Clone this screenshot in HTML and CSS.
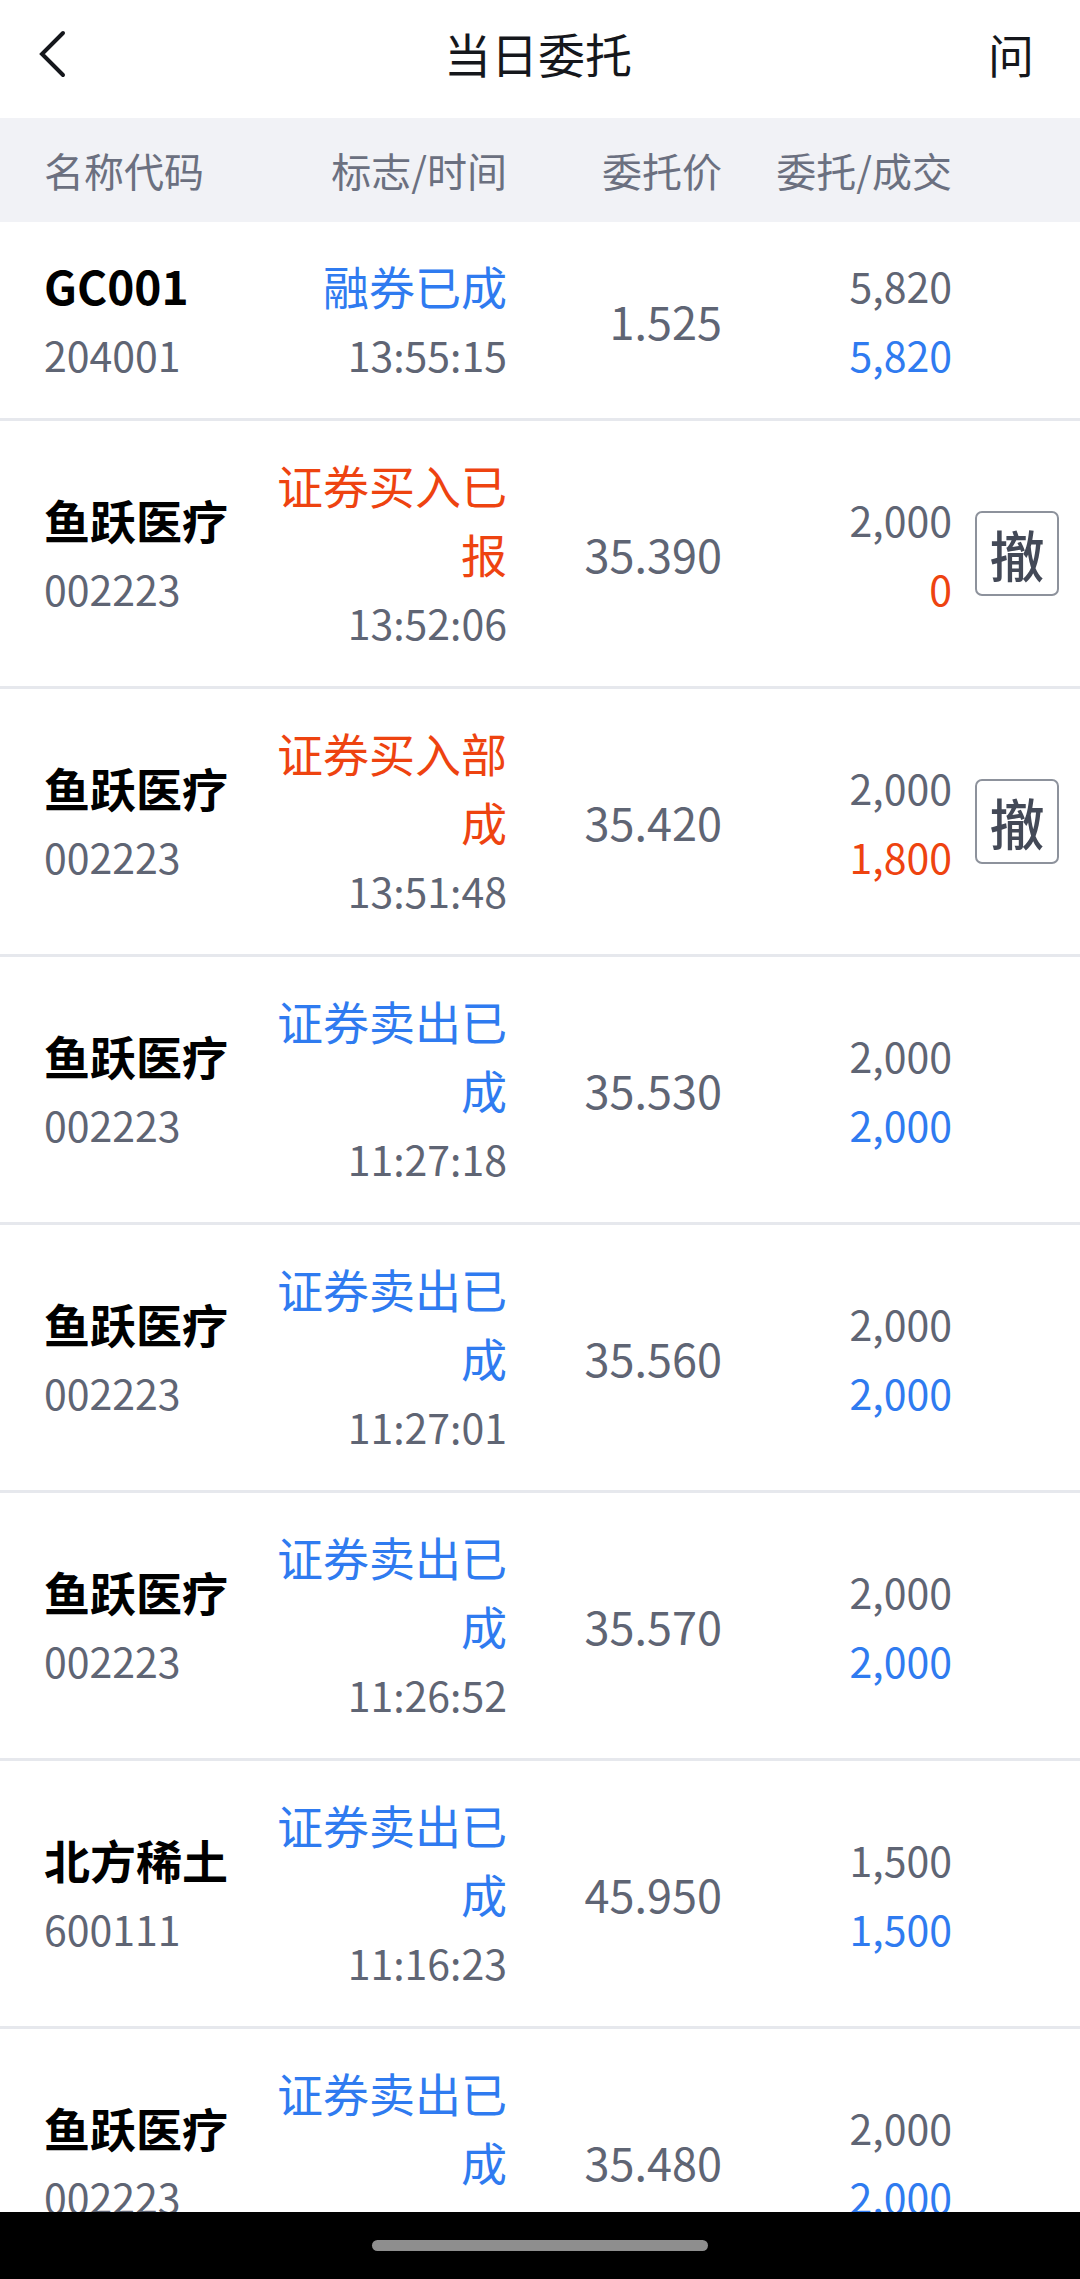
FILE: index.html
```html
<!DOCTYPE html>
<html lang="zh-CN">
<head>
<meta charset="utf-8">
<title>当日委托</title>
<link rel="stylesheet" href="styles.css">
</head>
<body>
<div class="page">
  <header class="topbar">
    <div class="back">
      <svg width="30" height="48" viewBox="0 0 30 48"><polyline points="25,3 4,24 25,45" fill="none" stroke="#15171c" stroke-width="4" stroke-linecap="round" stroke-linejoin="miter"/></svg>
    </div>
    <div class="title">当日委托</div>
    <div class="ask">问</div>
  </header>

  <div class="thead">
    <div class="c1">名称代码</div>
    <div class="c2">标志/时间</div>
    <div class="c3">委托价</div>
    <div class="c4">委托/成交</div>
    <div class="c5"></div>
  </div>

  <div class="list">
    <div class="row">
      <div class="c1"><div class="name">GC001</div><div class="code">204001</div></div>
      <div class="c2"><div class="status blue">融券已成</div><div class="time">13:55:15</div></div>
      <div class="c3 price">1.525</div>
      <div class="c4"><div class="qty">5,820</div><div class="qty blue">5,820</div></div>
      <div class="c5"></div>
    </div>
    <div class="row">
      <div class="c1"><div class="name">鱼跃医疗</div><div class="code">002223</div></div>
      <div class="c2"><div class="status red">证券买入已报</div><div class="time">13:52:06</div></div>
      <div class="c3 price">35.390</div>
      <div class="c4"><div class="qty">2,000</div><div class="qty red">0</div></div>
      <div class="c5"><div class="cancel">撤</div></div>
    </div>
    <div class="row">
      <div class="c1"><div class="name">鱼跃医疗</div><div class="code">002223</div></div>
      <div class="c2"><div class="status red">证券买入部成</div><div class="time">13:51:48</div></div>
      <div class="c3 price">35.420</div>
      <div class="c4"><div class="qty">2,000</div><div class="qty red">1,800</div></div>
      <div class="c5"><div class="cancel">撤</div></div>
    </div>
    <div class="row">
      <div class="c1"><div class="name">鱼跃医疗</div><div class="code">002223</div></div>
      <div class="c2"><div class="status blue">证券卖出已成</div><div class="time">11:27:18</div></div>
      <div class="c3 price">35.530</div>
      <div class="c4"><div class="qty">2,000</div><div class="qty blue">2,000</div></div>
      <div class="c5"></div>
    </div>
    <div class="row">
      <div class="c1"><div class="name">鱼跃医疗</div><div class="code">002223</div></div>
      <div class="c2"><div class="status blue">证券卖出已成</div><div class="time">11:27:01</div></div>
      <div class="c3 price">35.560</div>
      <div class="c4"><div class="qty">2,000</div><div class="qty blue">2,000</div></div>
      <div class="c5"></div>
    </div>
    <div class="row">
      <div class="c1"><div class="name">鱼跃医疗</div><div class="code">002223</div></div>
      <div class="c2"><div class="status blue">证券卖出已成</div><div class="time">11:26:52</div></div>
      <div class="c3 price">35.570</div>
      <div class="c4"><div class="qty">2,000</div><div class="qty blue">2,000</div></div>
      <div class="c5"></div>
    </div>
    <div class="row">
      <div class="c1"><div class="name">北方稀土</div><div class="code">600111</div></div>
      <div class="c2"><div class="status blue">证券卖出已成</div><div class="time">11:16:23</div></div>
      <div class="c3 price">45.950</div>
      <div class="c4"><div class="qty">1,500</div><div class="qty blue">1,500</div></div>
      <div class="c5"></div>
    </div>
    <div class="row">
      <div class="c1"><div class="name">鱼跃医疗</div><div class="code">002223</div></div>
      <div class="c2"><div class="status blue">证券卖出已成</div><div class="time">11:15:40</div></div>
      <div class="c3 price">35.480</div>
      <div class="c4"><div class="qty">2,000</div><div class="qty blue">2,000</div></div>
      <div class="c5"></div>
    </div>
  </div>
</div>
<div class="navbar"><div class="pill"></div></div>
</body>
</html>
```

FILE: styles.css
```css
html, body {
  margin: 0;
  padding: 0;
  background: #ffffff;
}
body {
  width: 1080px;
  height: 2279px;
  overflow: hidden;
  font-family: "Noto Sans CJK SC", "Noto Sans", sans-serif;
  color: #15171c;
}
.page {
  width: 1080px;
}
.topbar {
  height: 118px;
  display: grid;
  grid-template-columns: 1fr auto 1fr;
  align-items: center;
  padding: 0 46px 12px 38px;
  box-sizing: border-box;
}
.back {
  display: flex;
  align-items: center;
  padding-top: 2px;
}
.back svg { display: block; }
.title {
  font-size: 47px;
  line-height: 60px;
  color: #15171c;
  text-align: center;
  padding-left: 4px;
}
.ask {
  font-size: 46px;
  line-height: 60px;
  text-align: right;
  color: #15171c;
}
.thead, .row {
  display: grid;
  grid-template-columns: 223px 240px 215px 230px 107px;
  padding-left: 44px;
  align-items: center;
}
.thead {
  height: 104px;
  background: #f1f2f6;
  font-size: 40px;
  color: #6b7080;
  line-height: 50px;
}
.thead .c2, .thead .c3, .thead .c4 { text-align: right; }
.row {
  padding-top: 29px;
  padding-bottom: 29px;
  border-bottom: 3px solid #e6e8ed;
  line-height: 69px;
}
.c2, .c3, .c4 { text-align: right; }
.name {
  font-size: 46px;
  font-weight: 700;
  color: #000000;
}
.code, .time, .qty {
  font-size: 41px;
  color: #5f6574;
}
.status {
  font-size: 46px;
}
.price {
  font-size: 45px;
  color: #5f6574;
}
.blue { color: #2f7bf0; }
.red { color: #ee4310; }
.c5 {
  display: flex;
  justify-content: flex-end;
}
.cancel {
  width: 84px;
  height: 85px;
  box-sizing: border-box;
  border: 2px solid #8d929c;
  border-radius: 7px;
  font-size: 55px;
  line-height: 80px;
  text-align: center;
  color: #434957;
  font-weight: 500;
}
.navbar {
  position: fixed;
  left: 0;
  bottom: 0;
  width: 1080px;
  height: 67px;
  background: #000000;
  display: flex;
  align-items: center;
  justify-content: center;
}
.pill {
  width: 336px;
  height: 11px;
  border-radius: 6px;
  background: #8e8e8e;
}
```
